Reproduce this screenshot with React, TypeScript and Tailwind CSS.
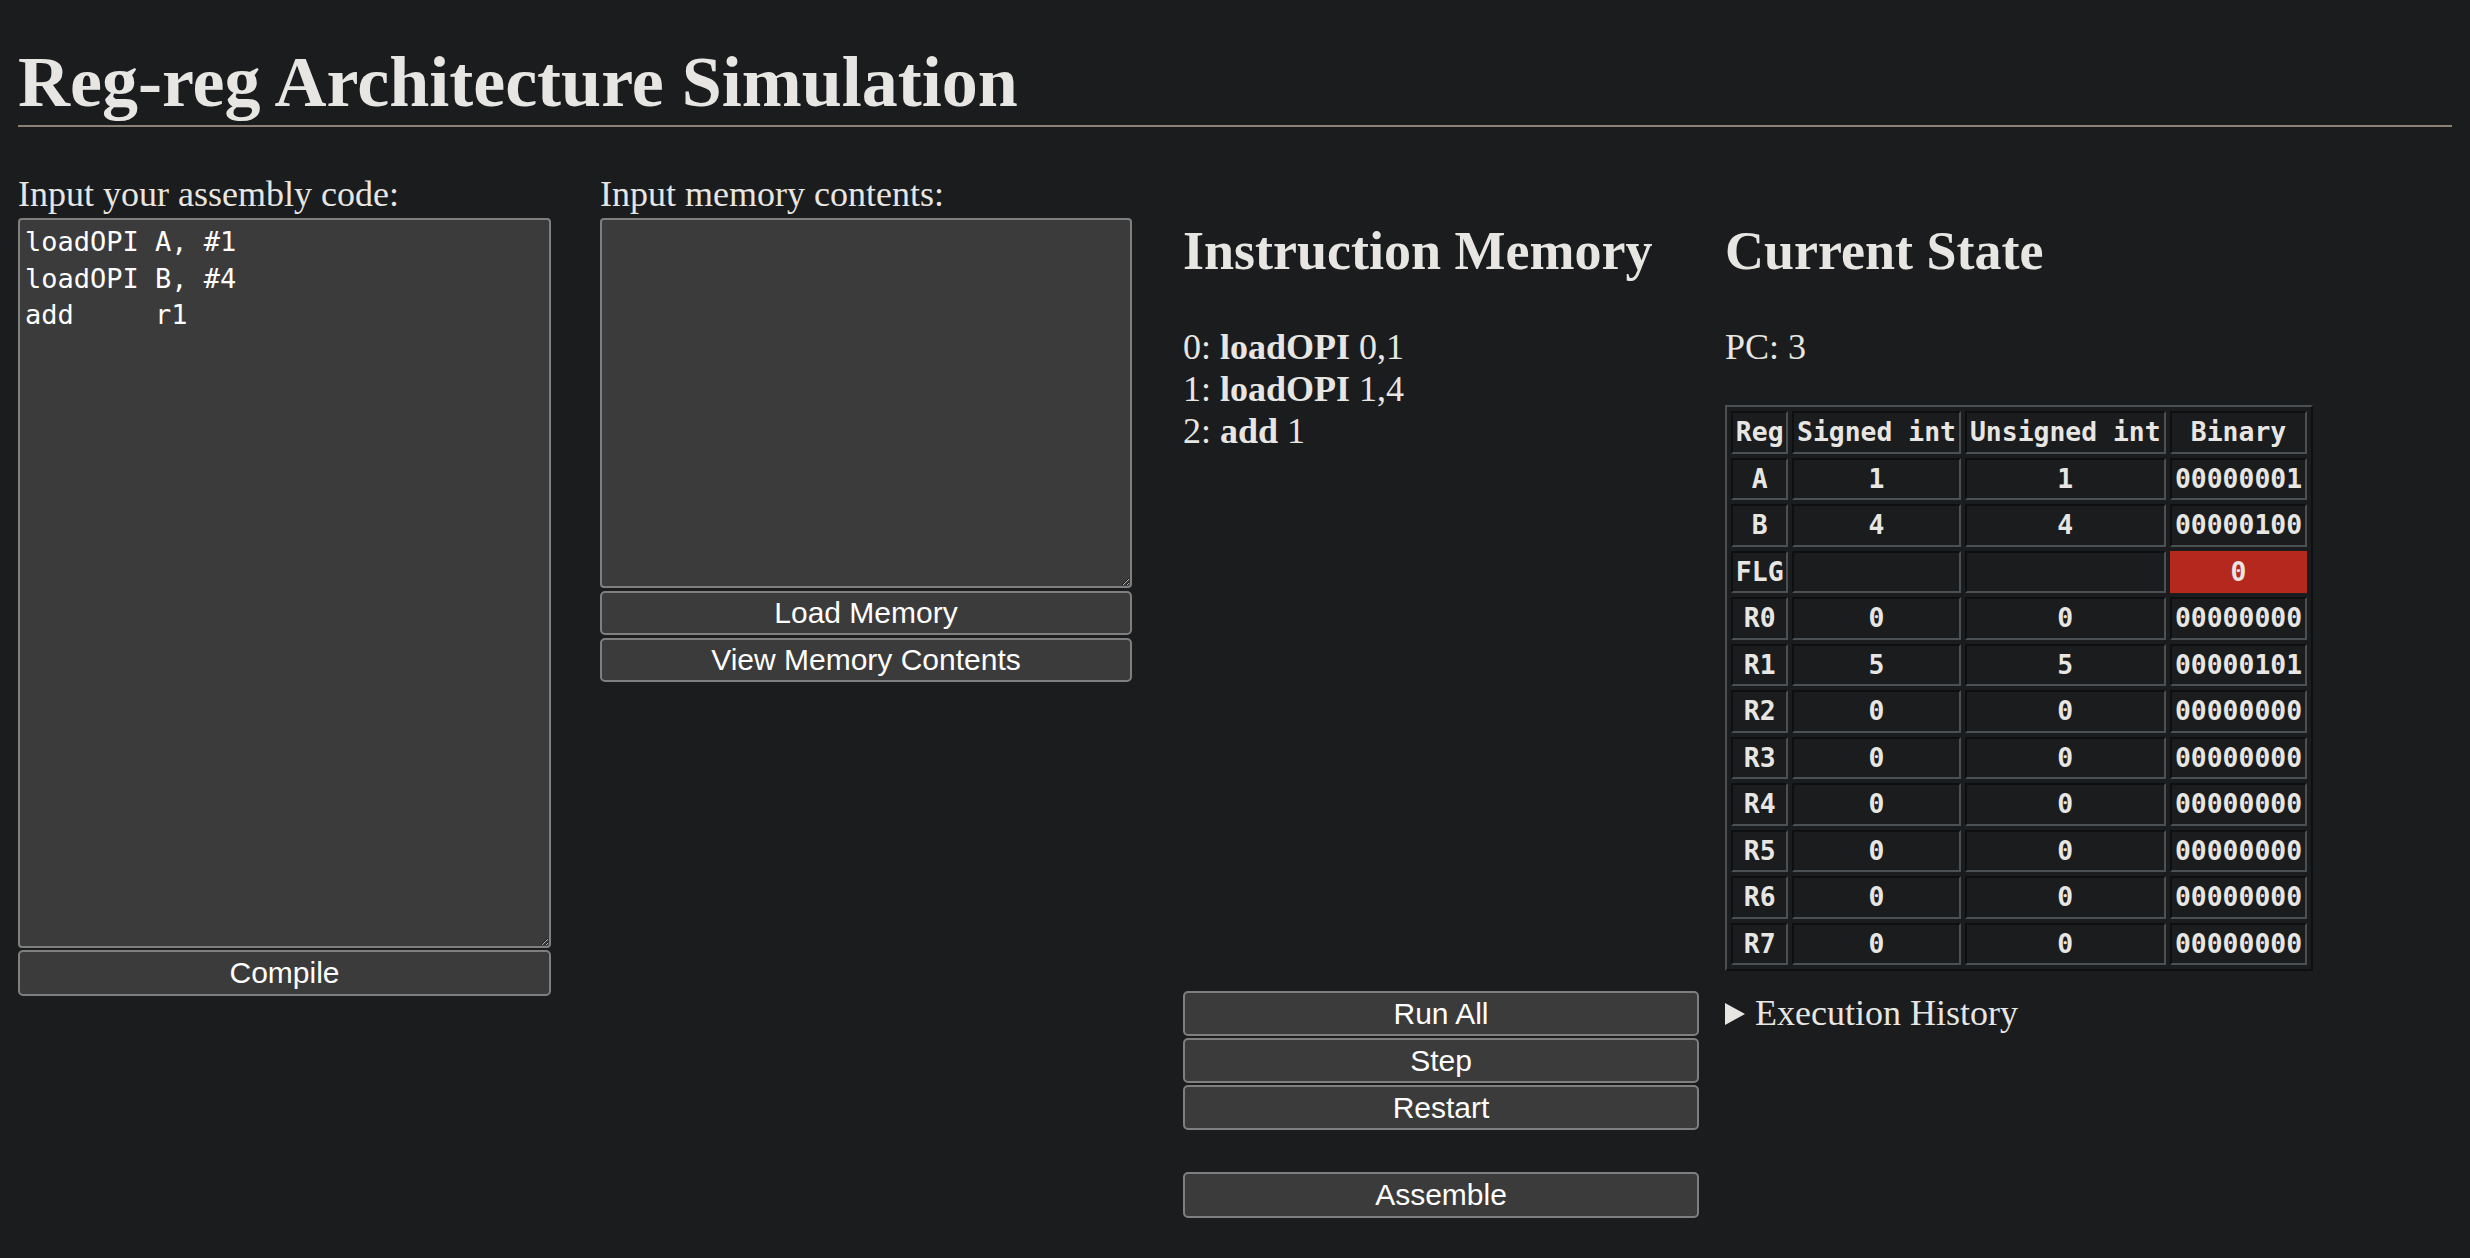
import React from "react";

const serif = { fontFamily: '"Liberation Serif", "Times New Roman", serif' };

function Btn({ label, cls }: { label: string; cls: string }) {
  return (
    <button
      type="button"
      className={
        "block w-full rounded-[5px] border-2 border-[#7f7f7f] bg-[#3b3b3b] text-center text-[30px] leading-none text-white font-['Liberation_Sans',Arial,sans-serif] " +
        cls
      }
    >
      {label}
    </button>
  );
}

const rows: [string, string, string, string][] = [
  ["A", "1", "1", "00000001"],
  ["B", "4", "4", "00000100"],
  ["FLG", "", "", "0"],
  ["R0", "0", "0", "00000000"],
  ["R1", "5", "5", "00000101"],
  ["R2", "0", "0", "00000000"],
  ["R3", "0", "0", "00000000"],
  ["R4", "0", "0", "00000000"],
  ["R5", "0", "0", "00000000"],
  ["R6", "0", "0", "00000000"],
  ["R7", "0", "0", "00000000"],
];

const cellBase =
  "h-[42.5px] p-0 text-center align-middle border-2 border-t-[#0e0f10] border-l-[#0e0f10] border-r-[#4a5053] border-b-[#4a5053]";

export default function App() {
  return (
    <div
      className="min-h-[1258px] w-full bg-[#1a1c1e] px-[18px] pb-[20px] text-[#e8e6e3]"
      style={serif}
    >
      <h1 className="mt-0 pt-[42px] text-[72px] font-bold leading-[80px] border-b-2 border-[#8c8273] pb-[3px]">
        Reg-reg Architecture Simulation
      </h1>

      <div className="mt-[47px] flex items-start text-[36px] leading-[41px]">
        {/* Column 1 */}
        <div className="w-[533px] shrink-0">
          <div className="leading-[41px]">Input your assembly code:</div>
          <textarea
            readOnly
            defaultValue={"loadOPI A, #1\nloadOPI B, #4\nadd     r1"}
            className="mt-[3px] block h-[730px] w-full rounded-[4px] border-2 border-[#7f7f7f] bg-[#3b3b3b] pl-[5px] pt-[4px] text-[27px] leading-[36.7px] text-white outline-none [color-scheme:dark] font-['DejaVu_Sans_Mono',monospace]"
          />
          <Btn label="Compile" cls="mt-[2px] h-[46px]" />
        </div>

        {/* Column 2 */}
        <div className="ml-[49px] w-[532px] shrink-0">
          <div className="leading-[41px]">Input memory contents:</div>
          <textarea
            readOnly
            defaultValue=""
            className="mt-[3px] block h-[370px] w-full rounded-[4px] border-2 border-[#7f7f7f] bg-[#3b3b3b] pl-[5px] pt-[4px] text-[27px] leading-[36.7px] text-white outline-none [color-scheme:dark] font-['DejaVu_Sans_Mono',monospace]"
          />
          <Btn label="Load Memory" cls="mt-[3px] h-[44px]" />
          <Btn label="View Memory Contents" cls="mt-[3px] h-[44px]" />
        </div>

        {/* Columns 3 and 4 */}
        <div className="ml-[51px] grid grid-cols-[516px_588px] items-start gap-x-[26px] gap-y-[19px]">
          <div>
            <h2 className="mt-[46px] text-[54px] font-bold leading-[62px]">Instruction Memory</h2>
            <div className="mt-[44px] text-[36px] leading-[42px]">
              <div>
                0: <b>loadOPI</b> 0,1
              </div>
              <div>
                1: <b>loadOPI</b> 1,4
              </div>
              <div>
                2: <b>add</b> 1
              </div>
            </div>
          </div>
          <div>
            <h2 className="mt-[46px] text-[54px] font-bold leading-[62px]">Current State</h2>
            <div className="mt-[44px] text-[36px] leading-[42px]">PC: 3</div>
            <table className="mt-[37px] w-[588px] table-fixed border-separate border-spacing-[4.5px] border-2 border-t-[#4a5053] border-l-[#4a5053] border-r-[#0e0f10] border-b-[#0e0f10] text-[26.4px] font-bold leading-none font-['DejaVu_Sans_Mono',monospace]">
              <colgroup>
                <col className="w-[57px]" />
                <col className="w-[167px]" />
                <col className="w-[200px]" />
                <col className="w-[136px]" />
              </colgroup>
              <thead>
                <tr>
                  <th className={cellBase}>Reg</th>
                  <th className={cellBase}>Signed int</th>
                  <th className={cellBase}>Unsigned int</th>
                  <th className={cellBase}>Binary</th>
                </tr>
              </thead>
              <tbody>
                {rows.map((r) => (
                  <tr key={r[0]}>
                    <td className={cellBase}>{r[0]}</td>
                    <td className={cellBase}>{r[1]}</td>
                    <td className={cellBase}>{r[2]}</td>
                    {r[0] === "FLG" ? (
                      <td className="h-[42.5px] p-0 text-center align-middle border-2 border-[#b5281d] bg-[#b5281d]">
                        {r[3]}
                      </td>
                    ) : (
                      <td className={cellBase}>{r[3]}</td>
                    )}
                  </tr>
                ))}
              </tbody>
            </table>
          </div>

          <div className="flex flex-col">
            <Btn label="Run All" cls="mt-[1px] h-[45px]" />
            <Btn label="Step" cls="mt-[2px] h-[45px]" />
            <Btn label="Restart" cls="mt-[2px] h-[45px]" />
            <Btn label="Assemble" cls="mt-[42px] h-[46px]" />
          </div>
          <div className="mt-[3px] flex items-center self-start text-[36px] leading-[41px]">
            <svg width="20" height="22" viewBox="0 0 20 22" className="mr-[10px] shrink-0">
              <polygon points="0,0 20,11 0,22" fill="#e8e6e3" />
            </svg>
            <span>Execution History</span>
          </div>
        </div>
      </div>
    </div>
  );
}
